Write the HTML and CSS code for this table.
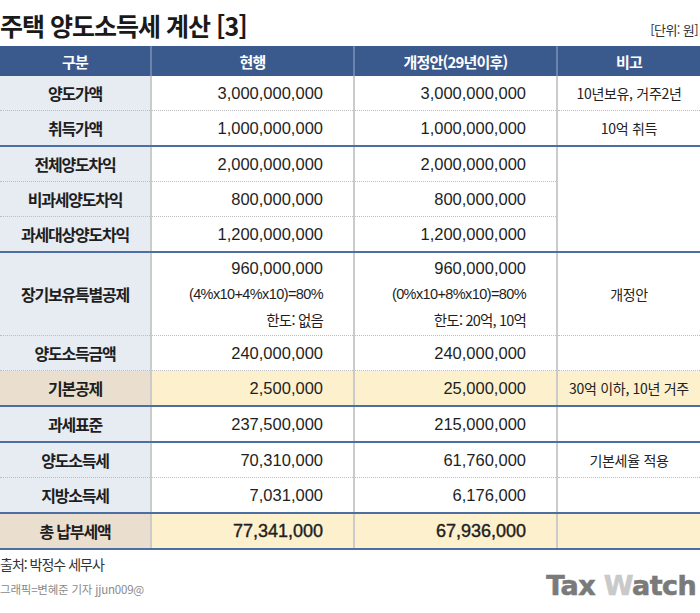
FILE: index.html
```html
<!DOCTYPE html>
<html lang="ko">
<head>
<meta charset="utf-8">
<link rel="stylesheet" href="styles.css">
</head>
<body>
<div class="page">
  <div class="top">
    <h1 class="title">주택 양도소득세 계산 [3]</h1>
    <span class="unit">[단위: 원]</span>
  </div>
  <table class="tbl">
    <colgroup>
      <col class="c1"><col class="c2"><col class="c3"><col class="c4">
    </colgroup>
    <thead>
      <tr><th>구분</th><th>현행</th><th>개정안(29년이후)</th><th>비고</th></tr>
    </thead>
    <tbody>
      <tr class="dot">
        <td class="lab">양도가액</td><td class="num">3,000,000,000</td><td class="num">3,000,000,000</td><td class="note">10년보유, 거주2년</td>
      </tr>
      <tr class="solid">
        <td class="lab">취득가액</td><td class="num">1,000,000,000</td><td class="num">1,000,000,000</td><td class="note">10억 취득</td>
      </tr>
      <tr class="dot">
        <td class="lab">전체양도차익</td><td class="num">2,000,000,000</td><td class="num">2,000,000,000</td><td class="note" rowspan="3"></td>
      </tr>
      <tr class="dot">
        <td class="lab">비과세양도차익</td><td class="num">800,000,000</td><td class="num">800,000,000</td>
      </tr>
      <tr class="solid">
        <td class="lab">과세대상양도차익</td><td class="num">1,200,000,000</td><td class="num">1,200,000,000</td>
      </tr>
      <tr class="dot tall">
        <td class="lab">장기보유특별공제</td>
        <td class="num multi">960,000,000<br><span class="sm">(4%x10+4%x10)=80%</span><br><span class="sm">한도: 없음</span></td>
        <td class="num multi">960,000,000<br><span class="sm">(0%x10+8%x10)=80%</span><br><span class="sm">한도: 20억, 10억</span></td>
        <td class="note">개정안</td>
      </tr>
      <tr class="dot">
        <td class="lab">양도소득금액</td><td class="num">240,000,000</td><td class="num">240,000,000</td><td class="note"></td>
      </tr>
      <tr class="solid hl">
        <td class="lab">기본공제</td><td class="num">2,500,000</td><td class="num">25,000,000</td><td class="note">30억 이하, 10년 거주</td>
      </tr>
      <tr class="solid">
        <td class="lab">과세표준</td><td class="num">237,500,000</td><td class="num">215,000,000</td><td class="note"></td>
      </tr>
      <tr class="dot">
        <td class="lab">양도소득세</td><td class="num">70,310,000</td><td class="num">61,760,000</td><td class="note">기본세율 적용</td>
      </tr>
      <tr class="solid">
        <td class="lab">지방소득세</td><td class="num">7,031,000</td><td class="num">6,176,000</td><td class="note"></td>
      </tr>
      <tr class="solid hl total">
        <td class="lab">총 납부세액</td><td class="num">77,341,000</td><td class="num">67,936,000</td><td class="note"></td>
      </tr>
    </tbody>
  </table>
  <div class="foot">
    <div class="credits">
      <p class="src">출처: 박정수 세무사</p>
      <p class="gfx">그래픽=변혜준 기자 jjun009@</p>
    </div>
    <div class="logo"><span class="tax">Tax</span> <span class="w">W</span><span class="tax">atch</span></div>
  </div>
</div>
</body>
</html>
```
FILE: styles.css
```css
html, body {
  margin: 0;
  padding: 0;
  background: #ffffff;
}
body {
  width: 700px;
  height: 613px;
  overflow: hidden;
  font-family: "Noto Sans CJK KR", "Liberation Sans", sans-serif;
  color: #222;
}
.page {
  width: 700px;
}
.top {
  display: flex;
  justify-content: space-between;
  align-items: flex-end;
  height: 46px;
}
.title {
  margin: 0 0 6px 0;
  font-size: 25px;
  font-weight: 700;
  letter-spacing: -1px;
  line-height: 30px;
  color: #1a1a1a;
}
.unit {
  font-size: 13px;
  letter-spacing: -0.6px;
  color: #333;
  margin: 0 2px 9px 0;
  line-height: 14px;
}
.tbl {
  width: 700px;
  border-collapse: collapse;
  table-layout: fixed;
}
.c1 { width: 151px; }
.c2 { width: 203px; }
.c3 { width: 203px; }
.c4 { width: 143px; }
.tbl th {
  background: #3a5a8e;
  color: #ffffff;
  font-size: 15px;
  font-weight: 700;
  letter-spacing: -0.8px;
  height: 30px;
  padding: 0;
  border-left: 2px solid #6b84ad;
}
.tbl th:first-child { border-left: none; }
.tbl td {
  height: 34px;
  padding: 0;
  border-left: 2px solid #cbcbcb;
  vertical-align: middle;
}
.tbl td:first-child { border-left: none; }
.tbl tr.dot td { border-bottom: 1px dotted #bdbdbd; }
.tbl tr.solid td { border-bottom: 2px solid #4c6ea3; }
.tbl td.note[rowspan] { border-bottom: 2px solid #4c6ea3; }
.lab {
  background: #e7ebf2;
  text-align: center;
  font-size: 16px;
  font-weight: 700;
  letter-spacing: -1.2px;
  color: #1e1e1e;
}
.num {
  text-align: right;
  padding-right: 30px !important;
  font-family: "Liberation Sans", "Noto Sans CJK KR", sans-serif;
  font-size: 16.5px;
  color: #1e1e1e;
}
.multi {
  line-height: 25px;
}
.tall td { height: 82px; }
.sm {
  font-size: 14.5px;
  letter-spacing: -0.6px;
}
.num .sm:last-child {
  font-family: "Noto Sans CJK KR", "Liberation Sans", sans-serif;
  font-size: 14.5px;
  letter-spacing: -0.8px;
}
.note {
  text-align: center;
  font-size: 14px;
  letter-spacing: -0.3px;
  color: #222;
}
.hl td { background: #fdf0cc; }
.hl td.lab { background: #eadfcf; }
.total td { font-weight: 700; }
.total td.num { font-size: 18px; font-weight: 400; -webkit-text-stroke: 0.4px #1e1e1e; }
.foot {
  display: flex;
  justify-content: space-between;
  align-items: flex-end;
}
.credits p { margin: 0; }
.src {
  margin-top: 4px !important;
  font-size: 14px;
  letter-spacing: -1px;
  color: #333;
  line-height: 20px;
}
.gfx {
  margin-top: 8px !important;
  font-size: 11.5px;
  letter-spacing: -0.2px;
  color: #8a8a8a;
  line-height: 14px;
}
.logo {
  font-family: "DejaVu Sans", sans-serif;
  font-weight: 700;
  font-size: 27px;
  letter-spacing: -0.6px;
  line-height: 24px;
  margin: 0 4px -2px 0;
  white-space: nowrap;
  -webkit-text-stroke: 0.6px currentColor;
}
.logo .tax { color: #7a7a7a; }
.logo .w { color: #c9c9c9; }
```
